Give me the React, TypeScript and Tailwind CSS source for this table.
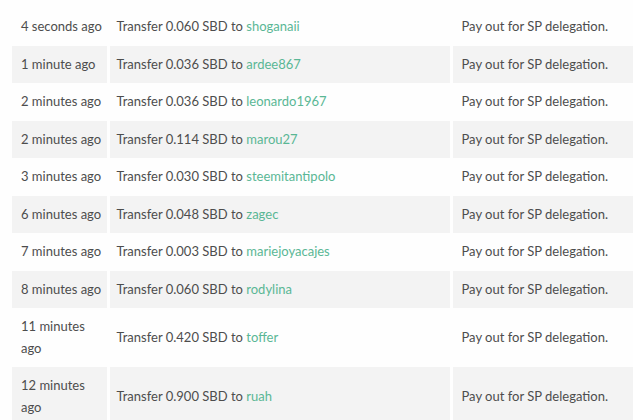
const rows: [string[], string, string][] = [
  [["4 seconds ago"], "0.060", "shoganaii"],
  [["1 minute ago"], "0.036", "ardee867"],
  [["2 minutes ago"], "0.036", "leonardo1967"],
  [["2 minutes ago"], "0.114", "marou27"],
  [["3 minutes ago"], "0.030", "steemitantipolo"],
  [["6 minutes ago"], "0.048", "zagec"],
  [["7 minutes ago"], "0.003", "mariejoyacajes"],
  [["8 minutes ago"], "0.060", "rodylina"],
  [["11 minutes", "ago"], "0.420", "toffer"],
  [["12 minutes", "ago"], "0.900", "ruah"],
];

export default function App() {
  return (
    <div className="w-[633px] h-[420px] overflow-hidden bg-[#fefefe] pt-[8px] pl-[12px]">
      <table
        className="w-[640px] table-fixed border-collapse text-[13px] leading-[21.5px] text-[#4d4d4d]"
        style={{ fontFamily: "Lato, 'Liberation Sans', sans-serif" }}
      >
        <colgroup>
          <col className="w-[96px]" />
          <col className="w-[343px]" />
          <col />
        </colgroup>
        <tbody>
          {rows.map(([time, amount, user], i) => (
            <tr key={i} className={i % 2 === 1 ? "bg-[#f3f3f3]" : "bg-[#fefefe]"}>
              <td className="pl-[9px] pr-0 py-2 border-r-[3px] border-[#fefefe] align-middle whitespace-nowrap">
                {time.map((line, j) => (
                  <div key={j}>{line}</div>
                ))}
              </td>
              <td className="pl-[7px] pr-2 py-2 border-r-[3px] border-[#fefefe] align-middle">
                Transfer {amount} SBD to <a className="text-[#5ab795]">{user}</a>
              </td>
              <td className="pl-[9px] pr-2 py-2 align-middle">Pay out for SP delegation.</td>
            </tr>
          ))}
        </tbody>
      </table>
    </div>
  );
}
